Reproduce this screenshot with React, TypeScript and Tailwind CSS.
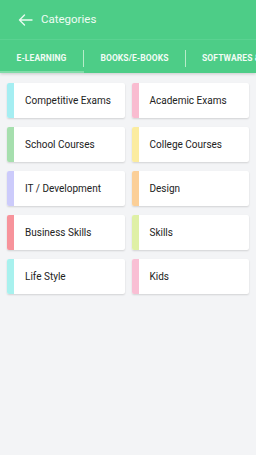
import React from "react";

const items: [string, string][] = [
  ["Competitive Exams", "#a5eef2"],
  ["Academic Exams", "#f9bcd0"],
  ["School Courses", "#a6dfae"],
  ["College Courses", "#fbeca0"],
  ["IT / Development", "#cccbfb"],
  ["Design", "#fbcf98"],
  ["Business Skills", "#f7939b"],
  ["Skills", "#dff0a6"],
  ["Life Style", "#a8f1ee"],
  ["Kids", "#f9bfd4"],
];

export default function App() {
  return (
    <div className="w-[256px] h-[455px] bg-[#f3f4f6] overflow-hidden" style={{ fontFamily: "Roboto, 'Liberation Sans', sans-serif" }}>
      <div className="bg-[#4dcd87] shadow-[0_1px_3px_rgba(0,0,0,0.18)] relative">
        <div className="h-[40px] flex items-center pl-[18px] border-b border-[#5ad291]">
          <svg width="15" height="12" viewBox="0 0 15 12" fill="none" stroke="#e9fbf0" strokeWidth="1.4" strokeLinecap="round" strokeLinejoin="round">
            <path d="M14 6H1.5M6.5 1L1.5 6l5 5" />
          </svg>
          <span className="ml-[8px] text-[11.5px] text-[#effcf4]">Categories</span>
        </div>
        <div className="h-[33px] pt-[3px] flex items-center whitespace-nowrap relative">
          <div className="w-[83px] shrink-0 text-center text-[8.5px] font-bold text-[#f1fcf5] tracking-[0.1px]">E-LEARNING</div>
          <div className="w-px h-[17px] shrink-0 bg-[#b7ecc9]" />
          <div className="w-[101px] shrink-0 text-center text-[8.5px] font-bold text-[#f1fcf5] tracking-[0.1px]">BOOKS/E-BOOKS</div>
          <div className="w-px h-[17px] shrink-0 bg-[#b7ecc9]" />
          <div className="pl-[16px] shrink-0 text-[8.5px] font-bold text-[#f1fcf5] tracking-[0.1px]">SOFTWARES &amp; TOOLS</div>
          <div className="absolute left-0 bottom-0 w-[84px] h-[2px] bg-[#7fdca8]" />
        </div>
      </div>
      <div className="grid grid-cols-2 gap-x-[7px] gap-y-[9px] px-[7px] pt-[10px]">
        {items.map(([label, color]) => (
          <div key={label} className="h-[35px] bg-white flex items-center rounded-[2px] shadow-[0_1px_2px_rgba(0,0,0,0.14)] overflow-hidden">
            <div className="w-[7px] h-full" style={{ background: color }} />
            <span className="ml-[11px] text-[10px] text-[#222222]">{label}</span>
          </div>
        ))}
      </div>
    </div>
  );
}
